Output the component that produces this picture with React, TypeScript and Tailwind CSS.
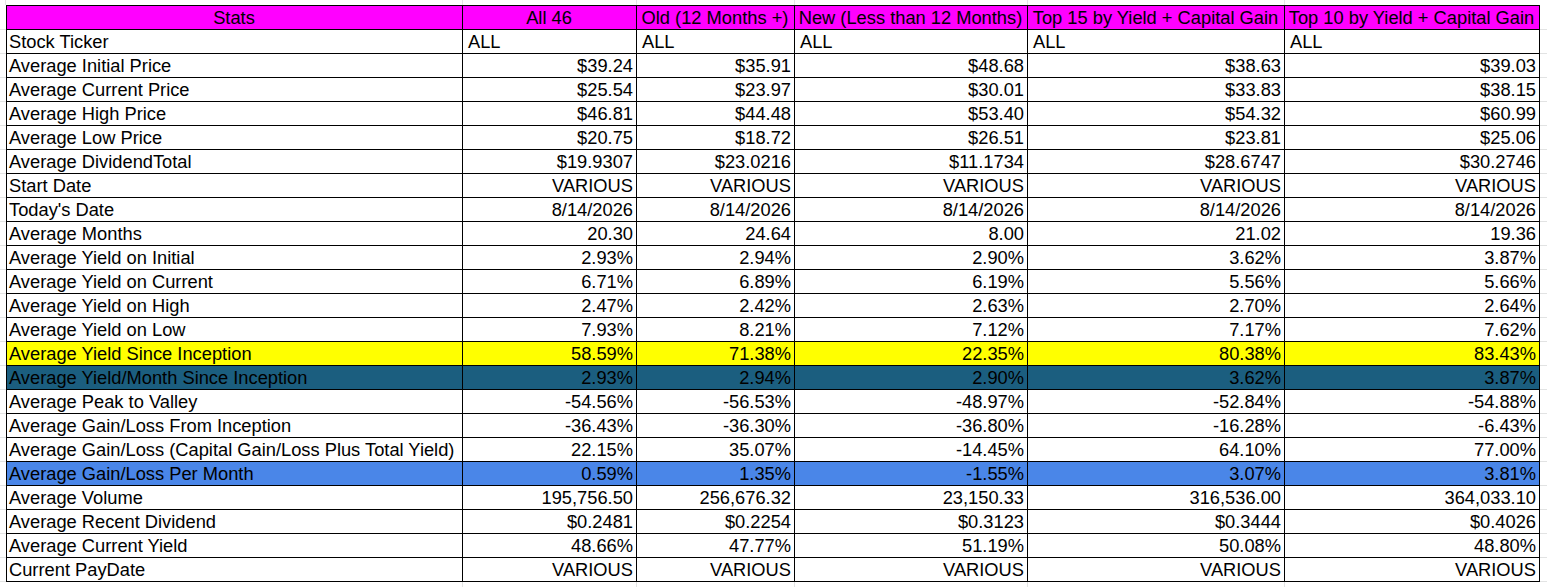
type Row = {
  label: string;
  values: string[];
  bg?: string;
  left?: boolean;
};

const header = [
  "Stats",
  "All 46",
  "Old (12 Months +)",
  "New (Less than 12 Months)",
  "Top 15 by Yield + Capital Gain",
  "Top 10 by Yield + Capital Gain",
];

const various = ["VARIOUS", "VARIOUS", "VARIOUS", "VARIOUS", "VARIOUS"];

const rows: Row[] = [
  { label: "Stock Ticker", values: ["ALL", "ALL", "ALL", "ALL", "ALL"], left: true },
  { label: "Average Initial Price", values: ["$39.24", "$35.91", "$48.68", "$38.63", "$39.03"] },
  { label: "Average Current Price", values: ["$25.54", "$23.97", "$30.01", "$33.83", "$38.15"] },
  { label: "Average High Price", values: ["$46.81", "$44.48", "$53.40", "$54.32", "$60.99"] },
  { label: "Average Low Price", values: ["$20.75", "$18.72", "$26.51", "$23.81", "$25.06"] },
  { label: "Average DividendTotal", values: ["$19.9307", "$23.0216", "$11.1734", "$28.6747", "$30.2746"] },
  { label: "Start Date", values: various },
  { label: "Today's Date", values: ["8/14/2026", "8/14/2026", "8/14/2026", "8/14/2026", "8/14/2026"] },
  { label: "Average Months", values: ["20.30", "24.64", "8.00", "21.02", "19.36"] },
  { label: "Average Yield on Initial", values: ["2.93%", "2.94%", "2.90%", "3.62%", "3.87%"] },
  { label: "Average Yield on Current", values: ["6.71%", "6.89%", "6.19%", "5.56%", "5.66%"] },
  { label: "Average Yield on High", values: ["2.47%", "2.42%", "2.63%", "2.70%", "2.64%"] },
  { label: "Average Yield on Low", values: ["7.93%", "8.21%", "7.12%", "7.17%", "7.62%"] },
  { label: "Average Yield Since Inception", values: ["58.59%", "71.38%", "22.35%", "80.38%", "83.43%"], bg: "bg-[#ffff00]" },
  { label: "Average Yield/Month Since Inception", values: ["2.93%", "2.94%", "2.90%", "3.62%", "3.87%"], bg: "bg-[#1b5e7f]" },
  { label: "Average Peak to Valley", values: ["-54.56%", "-56.53%", "-48.97%", "-52.84%", "-54.88%"] },
  { label: "Average Gain/Loss From Inception", values: ["-36.43%", "-36.30%", "-36.80%", "-16.28%", "-6.43%"] },
  { label: "Average Gain/Loss (Capital Gain/Loss Plus Total Yield)", values: ["22.15%", "35.07%", "-14.45%", "64.10%", "77.00%"] },
  { label: "Average Gain/Loss Per Month", values: ["0.59%", "1.35%", "-1.55%", "3.07%", "3.81%"], bg: "bg-[#4a86e8]" },
  { label: "Average Volume", values: ["195,756.50", "256,676.32", "23,150.33", "316,536.00", "364,033.10"] },
  { label: "Average Recent Dividend", values: ["$0.2481", "$0.2254", "$0.3123", "$0.3444", "$0.4026"] },
  { label: "Average Current Yield", values: ["48.66%", "47.77%", "51.19%", "50.08%", "48.80%"] },
  { label: "Current PayDate", values: various },
];

// column widths incl. the left border line
const widths = ["w-[457px]", "w-[174px]", "w-[158px]", "w-[233px]", "w-[257px]", "w-[255px]"];

const cell =
  "border-r border-b border-black pl-[2px] pr-[3px] py-0 h-[24px] whitespace-nowrap overflow-hidden align-middle";

export default function App() {
  return (
    <div className="w-[1547px] h-[587px] overflow-hidden bg-white font-['Liberation_Sans',Arial,sans-serif] text-[18.3px] leading-[23px] text-black">
      <table className="border-separate border-spacing-0 table-fixed">
        <colgroup>
          <col className="w-[6px]" />
          {widths.map((w, i) => (
            <col key={i} className={w} />
          ))}
          <col className="w-[7px]" />
        </colgroup>
        <tbody>
          {/* spreadsheet gridlines above the table */}
          <tr>
            <td className="h-[5px] border-r border-[#e2e3e3] p-0" />
            {widths.map((_, i) => (
              <td key={i} className={i < 5 ? "h-[5px] border-r border-[#e2e3e3] p-0" : "h-[5px] p-0"} />
            ))}
            <td className="h-[5px] p-0" />
          </tr>

          {/* header */}
          <tr>
            <td className="border-b border-[#e2e3e3] p-0" />
            {header.map((h, i) => (
              <td
                key={h}
                className={`${cell} !h-[25px] border-t bg-[#ff00ff] text-center ${i === 0 ? "border-l" : ""}`}
              >
                {h}
              </td>
            ))}
            <td className="border-b border-[#e2e3e3] p-0" />
          </tr>

          {rows.map((r) => (
            <tr key={r.label}>
              <td className="border-b border-[#e2e3e3] p-0" />
              <td className={`${cell} border-l text-left ${r.bg ?? ""}`}>{r.label}</td>
              {r.values.map((v, i) => (
                <td
                  key={i}
                  className={`${cell} ${r.left ? "text-left !pl-[5px]" : "text-right"} ${r.bg ?? ""}`}
                >
                  {v}
                </td>
              ))}
              <td className="border-b border-[#e2e3e3] p-0" />
            </tr>
          ))}

          {/* gridlines below */}
          <tr>
            <td className="h-[6px] p-0" />
            {widths.map((_, i) => (
              <td key={i} className={i < 5 ? "h-[6px] border-r border-[#e2e3e3] p-0" : "h-[6px] p-0"} />
            ))}
            <td className="h-[6px] p-0" />
          </tr>
        </tbody>
      </table>
    </div>
  );
}
